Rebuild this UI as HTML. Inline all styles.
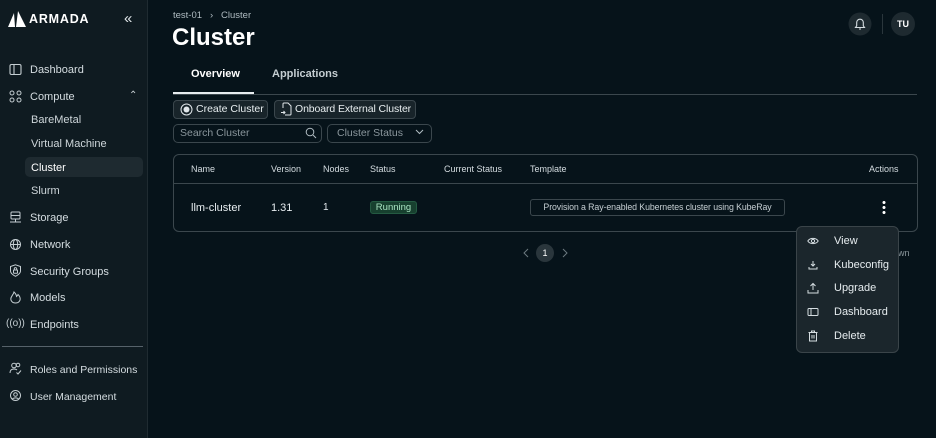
<!DOCTYPE html>
<html><head><meta charset="utf-8"><style>
*{box-sizing:border-box;margin:0;padding:0}
body{width:936px;height:438px;background:#06131a;font-family:"Liberation Sans",sans-serif;color:#e6ecef;position:relative;overflow:hidden;font-size:11px}
.abs{position:absolute;white-space:nowrap}
.sb{left:0;top:0;width:148px;height:438px;background:#0f1b21;border-right:1px solid #1f2b31}
.nav{position:absolute;left:30px;font-size:11px;color:#d5dde1;line-height:14px;white-space:nowrap}
.ico{position:absolute;left:9px;width:13px;height:13px}
.sub{position:absolute;left:31px;font-size:11px;color:#cfd7db;line-height:14px}
.btn{position:absolute;height:19px;border:1px solid #3b474d;background:#18242a;border-radius:4px;font-size:10.5px;line-height:17px;color:#e8eef0;padding-left:22px;white-space:nowrap;overflow:hidden}
.inp{position:absolute;height:19px;border:1px solid #3b474d;border-radius:5px;font-size:10.5px;line-height:17px;color:#8a969c;padding-left:6px;white-space:nowrap}
.th{position:absolute;top:164px;font-size:9px;color:#d5dde1}
.td{position:absolute;top:202px;font-size:11px;color:#e6ecef}
.mi{position:absolute;left:834px;font-size:11px;color:#e6ecef}
.mic{position:absolute;left:807px;width:12px;height:12px}
</style></head><body>
<div class="abs sb"></div>
<svg class="abs" style="left:7px;top:10px" width="20" height="18" viewBox="0 0 20 18"><path d="M1 17 L7 3 L8 17Z" fill="#fff"/><path d="M9 17 L11 1 L19 17Z" fill="#fff"/></svg>
<div class="abs" style="left:29px;top:12px;font-size:12.5px;font-weight:bold;letter-spacing:0.8px;color:#fff">ARMADA</div>
<div class="abs" style="left:124px;top:10px;font-size:15px;color:#e0e6e9">«</div>

<svg class="ico" style="top:63px" viewBox="0 0 13 13"><rect x="1" y="1.5" width="11" height="10" rx="1.5" fill="none" stroke="#c5ced2" stroke-width="1.1"/><line x1="5" y1="1.5" x2="5" y2="11.5" stroke="#c5ced2" stroke-width="1.1"/></svg>
<div class="nav" style="top:63px">Dashboard</div>
<svg class="ico" style="top:90px" viewBox="0 0 13 13" fill="none" stroke="#c5ced2" stroke-width="1"><circle cx="3" cy="3" r="2"/><circle cx="10" cy="3" r="2"/><circle cx="3" cy="10" r="2"/><circle cx="10" cy="10" r="2"/></svg>
<div class="nav" style="top:90px">Compute</div>
<div class="abs" style="left:129px;top:90px;font-size:10px;color:#c5ced2">⌃</div>
<div class="sub" style="top:113px">BareMetal</div>
<div class="sub" style="top:137px">Virtual Machine</div>
<div class="abs" style="left:25px;top:157px;width:118px;height:20px;background:#1e2a30;border-radius:5px"></div>
<div class="sub" style="top:161px;color:#fff">Cluster</div>
<div class="sub" style="top:184px">Slurm</div>
<svg class="ico" style="top:211px" viewBox="0 0 13 13" fill="none" stroke="#c5ced2" stroke-width="1"><rect x="2" y="1" width="9" height="7" rx="1"/><line x1="2" y1="4.5" x2="11" y2="4.5"/><line x1="1" y1="11" x2="12" y2="11"/><line x1="6.5" y1="8" x2="6.5" y2="11"/></svg>
<div class="nav" style="top:211px">Storage</div>
<svg class="ico" style="top:238px" viewBox="0 0 13 13" fill="none" stroke="#c5ced2" stroke-width="1"><circle cx="6.5" cy="6.5" r="5"/><ellipse cx="6.5" cy="6.5" rx="2.2" ry="5"/><line x1="1.5" y1="6.5" x2="11.5" y2="6.5"/></svg>
<div class="nav" style="top:238px">Network</div>
<svg class="ico" style="top:264px" viewBox="0 0 13 13" fill="none" stroke="#c5ced2" stroke-width="1"><path d="M6.5 0.8 L11.5 2.5 V7 C11.5 10 6.5 12.3 6.5 12.3 C6.5 12.3 1.5 10 1.5 7 V2.5Z"/><rect x="4.5" y="6" width="4" height="3.2" rx="0.5"/><path d="M5.3 6 V4.8 A1.2 1.2 0 0 1 7.7 4.8 V6"/></svg>
<div class="nav" style="top:265px">Security Groups</div>
<svg class="ico" style="top:291px" viewBox="0 0 13 13" fill="none" stroke="#c5ced2" stroke-width="1"><path d="M6.5 12 C3 12 1.8 9.5 1.8 8 C1.8 5.5 4 4.5 5 1 C7 3 7.5 4.5 7.5 5.5 C8.3 5 8.8 4 9 3.5 C10.5 5 11.2 6.5 11.2 8 C11.2 9.5 10 12 6.5 12Z"/></svg>
<div class="nav" style="top:291px">Models</div>
<div class="abs" style="left:6px;top:318px;font-size:10px;color:#c5ced2">((o))</div>
<div class="nav" style="top:318px">Endpoints</div>
<div class="abs" style="left:2px;top:346px;width:141px;height:1px;background:#56626a"></div>
<svg class="ico" style="top:362px" viewBox="0 0 13 13" fill="none" stroke="#c5ced2" stroke-width="1"><circle cx="5" cy="3.5" r="2.3"/><path d="M1 11 C1 8 3 7 5 7 C6.5 7 7.5 7.5 8 8"/><path d="M7.5 10.5 L9 12 L12 8.5"/><circle cx="9" cy="3" r="1.8"/></svg>
<div class="nav" style="top:363px;font-size:10.5px">Roles and Permissions</div>
<svg class="ico" style="top:389px" viewBox="0 0 13 13" fill="none" stroke="#c5ced2" stroke-width="1"><circle cx="6.5" cy="6.5" r="5"/><circle cx="6.5" cy="5.5" r="1.8"/><path d="M3.5 10 C4.5 8.5 8.5 8.5 9.5 10"/></svg>
<div class="nav" style="top:390px;font-size:10.5px">User Management</div>

<div class="abs" style="left:173px;top:10px;font-size:9.5px;color:#b0bcc2">test-01 &nbsp;&nbsp;›&nbsp;&nbsp; Cluster</div>
<div class="abs" style="left:172px;top:24px;font-size:24px;font-weight:bold;color:#fff">Cluster</div>
<div class="abs" style="left:191px;top:68px;font-size:11px;font-weight:bold;color:#fff">Overview</div>
<div class="abs" style="left:272px;top:68px;font-size:11px;font-weight:bold;color:#c5ced2">Applications</div>
<div class="abs" style="left:173px;top:94px;width:744px;height:1px;background:#3b474d"></div>
<div class="abs" style="left:173px;top:92px;width:81px;height:2px;background:#e6ecef"></div>

<svg class="abs" style="left:848px;top:12px" width="24" height="24"><circle cx="12" cy="12" r="11.5" fill="#1e2a30"/><path d="M7.5 15.5 H16.5 L15.3 13.8 V10.5 A3.3 3.3 0 0 0 8.7 10.5 V13.8Z M11 17 H13" fill="none" stroke="#d5dde1" stroke-width="1.1"/></svg>
<div class="abs" style="left:882px;top:14px;width:1px;height:20px;background:#2a363c"></div>
<div class="abs" style="left:891px;top:12px;width:24px;height:24px;border-radius:50%;background:#1e2a30;font-size:9px;font-weight:bold;text-align:center;line-height:24px;color:#fff">TU</div>

<div class="btn" style="left:173px;top:100px;width:95px">Create Cluster</div>
<svg class="abs" style="left:180px;top:103px" width="13" height="13"><circle cx="6.5" cy="6.5" r="5.5" fill="none" stroke="#e0e6e9"/><circle cx="6.5" cy="6.5" r="3" fill="#e0e6e9"/></svg>
<div class="btn" style="left:274px;top:100px;width:142px;padding-left:20px;font-size:10.5px;letter-spacing:-0.1px">Onboard External Cluster</div>
<svg class="abs" style="left:280px;top:102px" width="13" height="14" fill="none" stroke="#e0e6e9"><path d="M3 6 V2 A1 1 0 0 1 4 1 H8 L11 4 V12 A1 1 0 0 1 10 13 H5"/><path d="M1 10.5 H5 M3.5 9 L5 10.5 3.5 12"/></svg>
<div class="inp" style="left:173px;top:124px;width:149px">Search Cluster</div>
<svg class="abs" style="left:305px;top:127px" width="12" height="12" fill="none" stroke="#b0bcc2"><circle cx="5" cy="5" r="3.8"/><line x1="8" y1="8" x2="11" y2="11"/></svg>
<div class="inp" style="left:327px;top:124px;width:105px;padding-left:9px">Cluster Status</div>
<svg class="abs" style="left:415px;top:129px" width="9" height="6" fill="none" stroke="#b0bcc2"><path d="M1 1 L4.5 4.5 8 1"/></svg>

<div class="abs" style="left:173px;top:154px;width:745px;height:78px;border:1px solid #3b474d;border-radius:6px"></div>
<div class="abs" style="left:174px;top:183px;width:743px;height:1px;background:#3b474d"></div>
<div class="th" style="left:191px">Name</div>
<div class="th" style="left:271px">Version</div>
<div class="th" style="left:323px">Nodes</div>
<div class="th" style="left:370px">Status</div>
<div class="th" style="left:444px">Current Status</div>
<div class="th" style="left:530px">Template</div>
<div class="th" style="left:869px">Actions</div>
<div class="td" style="left:191px">llm-cluster</div>
<div class="td" style="left:271px">1.31</div>
<div class="td" style="left:323px;font-size:10px">1</div>
<div class="abs" style="left:370px;top:201px;width:47px;height:13px;background:#17402f;border:1px solid #245a42;border-radius:3px;font-size:9.5px;color:#a9e3c2;text-align:center;line-height:11px">Running</div>
<div class="abs" style="left:530px;top:199px;width:255px;height:17px;border:1px solid #3b474d;border-radius:3px;font-size:8.8px;color:#c5ced2;text-align:center;line-height:15px;letter-spacing:-0.1px">Provision a Ray-enabled Kubernetes cluster using KubeRay</div>
<div class="abs" style="left:882px;top:200px;width:4px;height:15px;background:radial-gradient(circle,#fff 1.4px,transparent 1.6px) 0 0/4px 5px"></div>

<svg class="abs" style="left:523px;top:248px" width="6" height="10" fill="none" stroke="#6d7a80"><path d="M5 1 L1 5 5 9"/></svg>
<div class="abs" style="left:536px;top:244px;width:18px;height:18px;border-radius:50%;background:#2a363c;font-size:9px;text-align:center;line-height:18px;color:#fff">1</div>
<svg class="abs" style="left:562px;top:248px" width="6" height="10" fill="none" stroke="#6d7a80"><path d="M1 1 L5 5 1 9"/></svg>
<div class="abs" style="left:893px;top:248px;font-size:9px;color:#8a969c">own</div>

<div class="abs" style="left:796px;top:226px;width:103px;height:127px;background:#1b262c;border:1px solid #3a4449;border-radius:6px"></div>
<svg class="mic" style="top:235px" viewBox="0 0 12 12" fill="none" stroke="#d5dde1"><path d="M0.8 6 C3 2.5 9 2.5 11.2 6 C9 9.5 3 9.5 0.8 6Z"/><circle cx="6" cy="6" r="1.6"/></svg>
<div class="mi" style="top:235px">View</div>
<svg class="mic" style="top:259px" viewBox="0 0 12 12" fill="none" stroke="#d5dde1"><path d="M6 2 V7 M4 5 L6 7 8 5 M2 8 V10 H10 V8"/></svg>
<div class="mi" style="top:259px">Kubeconfig</div>
<svg class="mic" style="top:282px" viewBox="0 0 12 12" fill="none" stroke="#d5dde1"><path d="M6 8 V1.5 M3.5 4 L6 1.5 8.5 4 M1 8 V11 H11 V8"/></svg>
<div class="mi" style="top:282px">Upgrade</div>
<svg class="mic" style="top:306px" viewBox="0 0 12 12" fill="none" stroke="#d5dde1"><rect x="1" y="2.5" width="10" height="7" rx="1"/><line x1="4" y1="2.5" x2="4" y2="9.5"/></svg>
<div class="mi" style="top:306px">Dashboard</div>
<svg class="mic" style="top:330px" viewBox="0 0 12 12" fill="none" stroke="#d5dde1"><path d="M1.5 2.5 H10.5 M4.5 2.5 V1 H7.5 V2.5 M2.5 2.5 V11 H9.5 V2.5 M5 5 V8.5 M7 5 V8.5"/></svg>
<div class="mi" style="top:330px">Delete</div>
</body></html>
